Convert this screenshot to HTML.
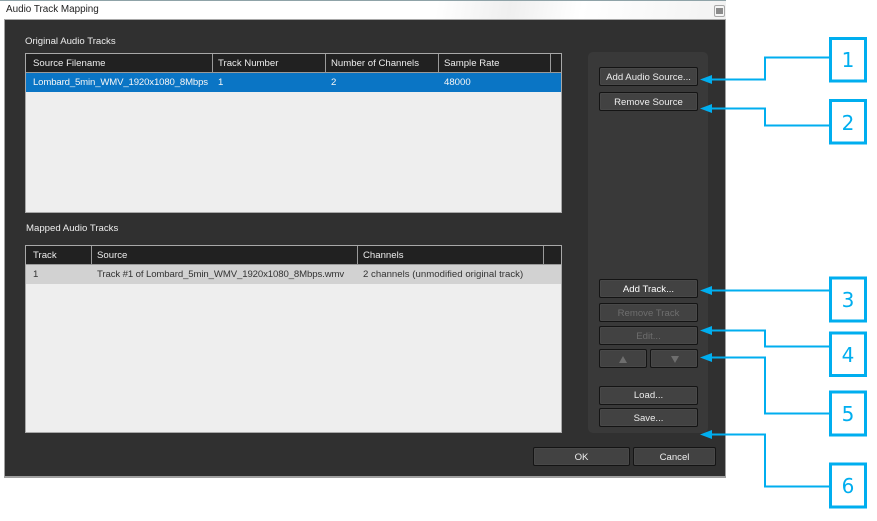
<!DOCTYPE html>
<html><head><meta charset="utf-8">
<style>
html,body{margin:0;padding:0;background:#fff;}
#r{position:relative;width:877px;height:521px;overflow:hidden;background:#fff;font-family:"Liberation Sans",sans-serif;font-size:9.6px;}
#r div{position:absolute;box-sizing:border-box;}
.t{white-space:nowrap;line-height:12px;}
.h{color:#ededed;}
.b{background:#424242;border:1px solid #141414;border-radius:2px;color:#ededed;text-align:center;line-height:19px;white-space:nowrap;box-shadow:inset 0 0 0 1px #484848;}
.d{color:#6e6e6e;}
.v{width:1px;background:#9a9a9a;}
</style></head><body>
<div id="r">
<div style="left:0;top:0;width:726px;height:1px;background:#8fa3a8"></div>
<div style="left:0;top:1px;width:726px;height:19px;background:linear-gradient(100deg,#fff 0%,#fff 60%,#efefef 70%,#fff 80%,#f2f2f2 100%)"></div>
<div class="t" style="left:6px;top:4px;color:#222;font-size:9.9px">Audio Track Mapping</div>
<div style="left:714px;top:5px;width:11px;height:12px;background:#f4f4f4;border:1px solid #a8a8a8;border-radius:2px"></div>
<div style="left:716px;top:8px;width:7px;height:6px;background:#8a8a8a"></div>
<div style="left:4px;top:19px;width:722px;height:459px;background:#303030;border:1px solid #a0a0a0;border-top:1px solid #a8a8a8;border-bottom:2px solid #a0a0a0"></div>

<div class="t h" style="left:25px;top:36px">Original Audio Tracks</div>
<div style="left:25px;top:53px;width:537px;height:160px;background:#eee;border:1px solid #a8a8a8"></div>
<div style="left:26px;top:54px;width:535px;height:19px;background:#212121"></div>
<div style="left:26px;top:72px;width:535px;height:1px;background:#9a9a9a"></div>
<div style="left:26px;top:73px;width:535px;height:19px;background:#0a75c5"></div>
<div class="v" style="left:212px;top:54px;height:18px"></div>
<div class="v" style="left:325px;top:54px;height:18px"></div>
<div class="v" style="left:438px;top:54px;height:18px"></div>
<div class="v" style="left:550px;top:54px;height:18px"></div>
<div class="t h" style="left:33px;top:57.500px">Source Filename</div>
<div class="t h" style="left:218px;top:57.500px">Track Number</div>
<div class="t h" style="left:331px;top:57.500px">Number of Channels</div>
<div class="t h" style="left:444px;top:57.500px">Sample Rate</div>
<div class="t" style="left:33px;top:77px;color:#f6f6f6;letter-spacing:-.15px">Lombard_5min_WMV_1920x1080_8Mbps</div>
<div class="t" style="left:218px;top:77px;color:#f6f6f6">1</div>
<div class="t" style="left:331px;top:77px;color:#f6f6f6">2</div>
<div class="t" style="left:444px;top:77px;color:#f6f6f6">48000</div>

<div class="t h" style="left:26px;top:223px">Mapped Audio Tracks</div>
<div style="left:25px;top:245px;width:537px;height:188px;background:#eee;border:1px solid #a8a8a8"></div>
<div style="left:26px;top:246px;width:535px;height:19px;background:#212121"></div>
<div style="left:26px;top:264px;width:535px;height:1px;background:#9a9a9a"></div>
<div style="left:26px;top:265px;width:535px;height:19px;background:#d2d2d2"></div>
<div class="v" style="left:91px;top:246px;height:18px"></div>
<div class="v" style="left:357px;top:246px;height:18px"></div>
<div class="v" style="left:543px;top:246px;height:18px"></div>
<div class="t h" style="left:33px;top:250px">Track</div>
<div class="t h" style="left:97px;top:250px">Source</div>
<div class="t h" style="left:363px;top:250px">Channels</div>
<div class="t" style="left:33px;top:269px;color:#333">1</div>
<div class="t" style="left:97px;top:269px;color:#333;letter-spacing:-.11px">Track #1 of Lombard_5min_WMV_1920x1080_8Mbps.wmv</div>
<div class="t" style="left:363px;top:269px;color:#333;letter-spacing:.02px">2 channels (unmodified original track)</div>

<div style="left:588px;top:52px;width:120px;height:381px;background:#393939;border-radius:5px"></div>
<div class="b" style="left:599px;top:67px;width:99px;height:19px">Add Audio Source...</div>
<div class="b" style="left:599px;top:92px;width:99px;height:19px">Remove Source</div>
<div class="b" style="left:599px;top:279px;width:99px;height:19px;color:#fff">Add Track...</div>
<div class="b d" style="left:599px;top:303px;width:99px;height:19px">Remove Track</div>
<div class="b d" style="left:599px;top:326px;width:99px;height:19px">Edit...</div>
<div class="b d" style="left:599px;top:349px;width:48px;height:19px"></div>
<div class="b d" style="left:650px;top:349px;width:48px;height:19px"></div>
<div class="b" style="left:599px;top:386px;width:99px;height:19px;line-height:18px">Load...</div>
<div class="b" style="left:599px;top:408px;width:99px;height:19px">Save...</div>
<div class="b" style="left:533px;top:447px;width:97px;height:19px;line-height:20px">OK</div>
<div class="b" style="left:633px;top:447px;width:83px;height:19px;line-height:20px">Cancel</div>

<svg style="position:absolute;left:0;top:0" width="877" height="521" viewBox="0 0 877 521">
<path d="M619 363l4-7 4 7zM671 356h8l-4 7z" fill="#6e6e6e"/>
<g fill="none" stroke="#00aeef" stroke-width="2">
<path d="M708 79.500H765V57.500H830"/>
<path d="M708 108.500H765V125.500H830"/>
<path d="M708 290.500H830"/>
<path d="M708 330.500H765V346.500H830"/>
<path d="M708 357.500H765V413.500H830"/>
<path d="M708 434.500H765V486.500H830"/>
</g>
<g fill="#00aeef">
<path d="M700 79.500l12-4.500v9z"/>
<path d="M700 108.500l12-4.500v9z"/>
<path d="M700 290.500l12-4.500v9z"/>
<path d="M700 330.500l12-4.500v9z"/>
<path d="M700 357.500l12-4.500v9z"/>
<path d="M700 434.500l12-4.500v9z"/>
</g>
<g fill="#fff" stroke="#00aeef" stroke-width="3">
<rect x="830.500" y="38.500" width="35" height="42.500"/>
<rect x="830.500" y="100.500" width="35" height="42.500"/>
<rect x="830.500" y="278" width="35" height="43"/>
<rect x="830.500" y="333" width="35" height="42.500"/>
<rect x="830.500" y="392" width="35" height="43"/>
<rect x="830.500" y="464" width="35" height="43"/>
</g>
<g fill="#00aeef" font-family="'DejaVu Sans',sans-serif" font-size="20" text-anchor="middle">
<text x="848" y="67">1</text>
<text x="848" y="130">2</text>
<text x="848" y="307">3</text>
<text x="848" y="362">4</text>
<text x="848" y="421">5</text>
<text x="848" y="493">6</text>
</g>
</svg>
</div>
</body></html>
